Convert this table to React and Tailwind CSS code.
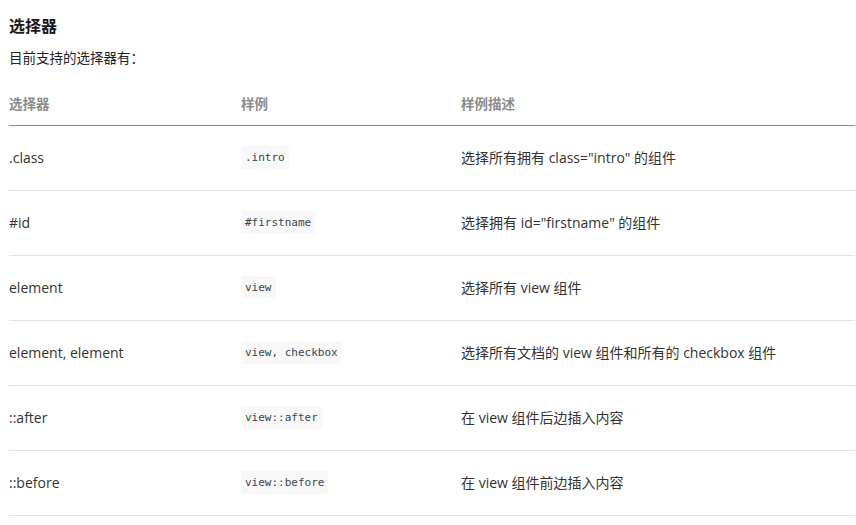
import React from "react";

const rows = [
  [".class", ".intro", '选择所有拥有 class="intro" 的组件'],
  ["#id", "#firstname", '选择拥有 id="firstname" 的组件'],
  ["element", "view", "选择所有 view 组件"],
  ["element, element", "view, checkbox", "选择所有文档的 view 组件和所有的 checkbox 组件"],
  ["::after", "view::after", "在 view 组件后边插入内容"],
  ["::before", "view::before", "在 view 组件前边插入内容"],
];

const font = { fontFamily: '"Open Sans", "Noto Sans CJK SC", sans-serif' };

export default function App() {
  return (
    <div
      className="w-[856px] h-[525px] bg-white overflow-hidden pl-[9px] pr-[1px] pt-[14px] text-[#333]"
      style={font}
    >
      <div className="text-[16px] leading-[24px] font-bold text-[#1a1a1a]">选择器</div>
      <div className="mt-[9px] text-[13.5px] leading-[22px] text-[#222]">目前支持的选择器有：</div>
      <div className="mt-[15px]">
        <div className="flex h-[42px] items-center border-b border-[#8a8a8a] text-[13.5px] font-bold text-[#8c8c8c]">
          <div className="w-[232px]">选择器</div>
          <div className="w-[220px]">样例</div>
          <div className="flex-1">样例描述</div>
        </div>
        {rows.map((r, i) => (
          <div
            key={i}
            className="flex h-[65px] items-center border-b border-[#e5e5e5] text-[14px] leading-[20px] pb-[1px]"
          >
            <div className="w-[232px]">{r[0]}</div>
            <div className="w-[220px]">
              <span
                className="inline-block bg-[#f8f8f8] px-[4px] py-[5px] rounded-[2px] text-[11px] leading-[13px] text-[#3c4650]"
                style={{ fontFamily: '"DejaVu Sans Mono", monospace' }}
              >
                {r[1]}
              </span>
            </div>
            <div className="flex-1">{r[2]}</div>
          </div>
        ))}
      </div>
    </div>
  );
}
